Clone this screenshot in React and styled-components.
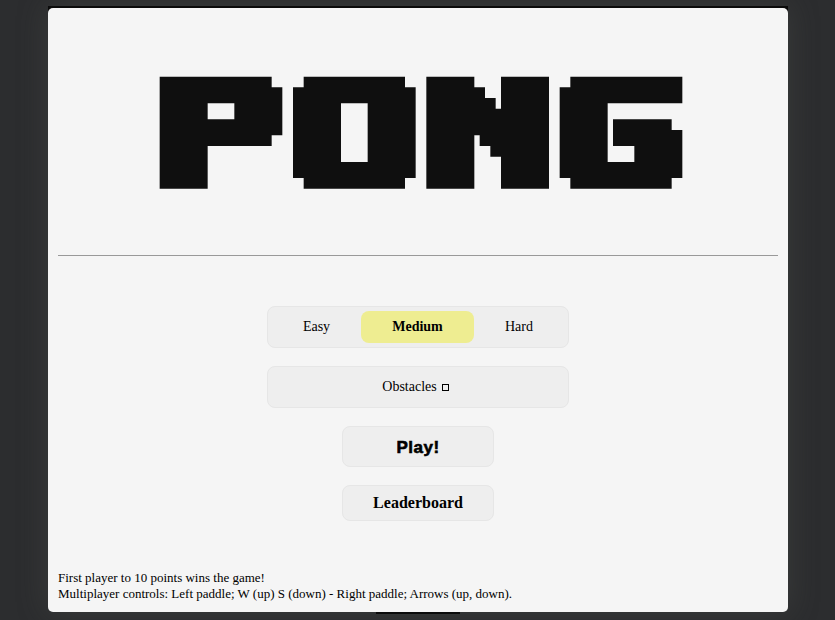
import React from "react";
import styled, { createGlobalStyle } from "styled-components";

const GlobalStyle = createGlobalStyle`
  * { box-sizing: border-box; }
  body {
    margin: 0;
    background: #2c2d2f;
    color: #000;
    font-family: "Liberation Serif", "Times New Roman", serif;
    overflow: hidden;
  }
`;

const Page = styled.div`
  height: 620px;
  padding-top: 6px;
  display: flex;
  flex-direction: column;
  align-items: center;
  overflow: hidden;
  border-left: 1px solid transparent;
`;

const Board = styled.main`
  width: 740px;
  height: 606px;
  border-top: 2px solid #0b0b0b;
  background: linear-gradient(#0b0b0b 8px, #363738 8px);
  border-radius: 0 0 4px 4px;
  box-shadow: 0 0 30px rgba(75, 77, 74, 0.45);
  flex: none;
`;

const Card = styled.div`
  height: 604px;
  padding: 0 10px 10px;
  border-radius: 5px;
  background: #f5f5f5;
  display: flex;
  flex-direction: column;
  align-items: center;
`;

const Title = styled.h1`
  width: 720px;
  height: 248px;
  margin: 0;
  padding: 68px 0 0 101px;
  border-bottom: 1px solid #999;
  line-height: 0;
`;

const Menu = styled.div`
  margin-top: 50px;
  display: flex;
  flex-direction: column;
  align-items: center;
  gap: 18px;
`;

const Panel = styled.div`
  width: 302px;
  height: 42px;
  padding-right: 5px;
  border: 1px solid #e6e6e6;
  border-radius: 8px;
  background: #eee;
  display: flex;
  align-items: center;
  justify-content: center;
  gap: 5px;
  font-size: 14px;
`;

const Levels = styled(Panel)`
  padding: 4px;
  gap: 0;
`;

const Level = styled.button`
  width: ${(p) => p.$width}px;
  height: 32px;
  padding: 0 0 1px;
  border: 0;
  border-radius: 8px;
  background: ${(p) => (p.$active ? "#eeed91" : "transparent")};
  font: ${(p) => (p.$active ? 700 : 400)} 14px "Liberation Serif", serif;
  color: #000;
`;

const Label = styled.span`
  padding-bottom: 1px;
`;

const CheckBox = styled.span`
  width: 7px;
  height: 7px;
  border: 1px solid #000;
  margin-top: 1px;
`;

const Action = styled.button`
  width: 152px;
  height: ${(p) => p.$height}px;
  padding: 0;
  border: 1px solid #e6e6e6;
  border-radius: 8px;
  background: #eee;
  color: #000;
  font: 700 16px "Liberation Serif", serif;
`;

const PlayAction = styled(Action)`
  padding-top: 2px;
  font: 700 17px "Liberation Sans", sans-serif;
  letter-spacing: 0.5px;
  -webkit-text-stroke: 0.6px #000;
`;

const Notes = styled.footer`
  width: 100%;
  margin-top: auto;
  font-size: 13px;
  line-height: 16px;
  white-space: nowrap;
`;

const Scroller = styled.div`
  width: 84px;
  height: 2px;
  background: #0b0b0b;
  flex: none;
`;

function Logo() {
  return (
    <svg width="524" height="114" viewBox="-0.125 -0.125 98.25 21.375" fill="#0f0f0f" fillRule="evenodd" role="img" aria-label="Pong">
      <path d="M0 0H21V2H23V11H21V13H9V21H0ZM9 5V8H14V5Z" />
      <path d="M27 0H46V2H48V19H46V21H27V19H25V2H27ZM34 5V16H39V5Z" />
      <path d="M50 0H59V2H61V4H63V6H64V0H73V21H64V15H62V13H60V11H59V21H50Z" />
      <path d="M77 0H98V5H84V16H89V13H85V8H96V10H98V19H96V21H77V19H75V2H77Z" />
    </svg>
  );
}

export default function App() {
  return (
    <>
      <GlobalStyle />
      <Page>
        <Board>
          <Card>
            <Title><Logo /></Title>
            <Menu>
              <Levels>
                <Level $width={89}>Easy</Level>
                <Level $width={113} $active>Medium</Level>
                <Level $width={90}>Hard</Level>
              </Levels>
              <Panel>
                <Label>Obstacles</Label>
                <CheckBox />
              </Panel>
              <PlayAction $height={41}>Play!</PlayAction>
              <Action $height={36}>Leaderboard</Action>
            </Menu>
            <Notes>
              First player to 10 points wins the game!
              <br />
              Multiplayer controls: Left paddle; W (up) S (down) - Right paddle; Arrows (up, down).
            </Notes>
          </Card>
        </Board>
        <Scroller />
      </Page>
    </>
  );
}
